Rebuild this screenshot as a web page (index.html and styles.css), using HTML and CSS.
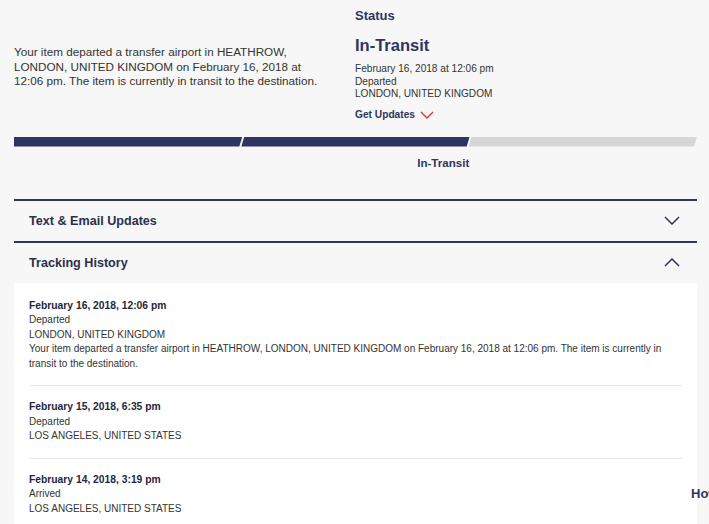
FILE: index.html
```html
<!DOCTYPE html>
<html lang="en">

<head>
    <meta charset="UTF-8">
    <meta name="viewport" content="width=device-width, initial-scale=1.0">
    <title>Tracking</title>
    <link rel="stylesheet" href="styles.css">
</head>

<body>

    <div class="page">
        <!-- SUMMARY -->
        <div class="summary">
            <p class="summary-text">Your item departed a transfer airport in HEATHROW, LONDON, UNITED KINGDOM on February 16, 2018 at 12:06 pm. The item is currently in transit to the destination.</p>
            <div class="status">
                <h3 class="status-label">Status</h3>
                <h2 class="status-value">In-Transit</h2>
                <div class="status-detail">
                    <div>February 16, 2018 at 12:06 pm</div>
                    <div>Departed</div>
                    <div>LONDON, UNITED KINGDOM</div>
                </div>
                <a class="get-updates">Get Updates
                    <svg width="14" height="8" viewBox="0 0 14 8"><path d="M1 1l6 6 6-6" fill="none" stroke="#e2352b" stroke-width="1.4"/></svg>
                </a>
            </div>
        </div>

        <!-- PROGRESS -->
        <div class="progress">
            <div class="step step-first done"></div>
            <div class="step done"></div>
            <div class="step step-last"></div>
        </div>
        <div class="progress-labels">
            <span></span>
            <span class="current">In-Transit</span>
            <span></span>
        </div>

        <!-- ACCORDION -->
        <div class="accordion">
            <div class="acc-head">
                <span>Text &amp; Email Updates</span>
                <svg width="16" height="9" viewBox="0 0 16 9"><path d="M1 1l7 7 7-7" fill="none" stroke="#2e3562" stroke-width="1.5"/></svg>
            </div>
            <div class="acc-head">
                <span>Tracking History</span>
                <svg width="16" height="9" viewBox="0 0 16 9"><path d="M1 8l7-7 7 7" fill="none" stroke="#2e3562" stroke-width="1.5"/></svg>
            </div>
            <div class="history">
                <div class="entry">
                    <div class="entry-date">February 16, 2018, 12:06 pm</div>
                    <div>Departed</div>
                    <div>LONDON, UNITED KINGDOM</div>
                    <div>Your item departed a transfer airport in HEATHROW, LONDON, UNITED KINGDOM on February 16, 2018 at 12:06 pm. The item is currently in transit to the destination.</div>
                </div>
                <div class="entry">
                    <div class="entry-date">February 15, 2018, 6:35 pm</div>
                    <div>Departed</div>
                    <div>LOS ANGELES, UNITED STATES</div>
                </div>
                <div class="entry">
                    <div class="entry-date">February 14, 2018, 3:19 pm</div>
                    <div>Arrived</div>
                    <div>LOS ANGELES, UNITED STATES</div>
                </div>
            </div>
        </div>

        <h3 class="side-title">How</h3>
    </div>

</body>

</html>
```

FILE: styles.css
```css
* {
    margin: 0;
    padding: 0;
    box-sizing: border-box;
}

body {
    background: #f7f7f7;
    font-family: "Liberation Sans", Arial, sans-serif;
    color: #333;
    overflow: hidden;
}

.page {
    position: relative;
    width: 697px;
    padding-left: 14px;
    min-height: 524px;
}

/* SUMMARY */
.summary {
    display: flex;
    align-items: center;
    padding: 8px 0 15px;
}

.summary-text {
    width: 341px;
    padding-right: 30px;
    font-size: 11.7px;
    line-height: 14.5px;
    padding-top: 4px;
}

.status {
    color: #2e3562;
}

.status-label {
    font-size: 13px;
    line-height: 16px;
}

.status-value {
    font-size: 16.5px;
    line-height: 20px;
    margin-top: 11px;
}

.status-detail {
    margin-top: 8px;
    font-size: 10.1px;
    line-height: 12.5px;
    color: #333;
}

.get-updates {
    display: flex;
    align-items: center;
    gap: 5px;
    margin-top: 7px;
    font-size: 10.2px;
    font-weight: bold;
    line-height: 14px;
}

/* PROGRESS */
.progress {
    display: flex;
    height: 10px;
}

.step {
    flex: 1;
    background: #d5d6d8;
    clip-path: polygon(3px 0, 100% 0, calc(100% - 3px) 100%, 0 100%);
}

.step + .step {
    margin-left: -1px;
}

.step.done {
    background: #2e3562;
}

.step-first {
    clip-path: polygon(0 0, 100% 0, calc(100% - 3px) 100%, 0 100%);
}

.progress-labels {
    display: flex;
    margin-top: 9px;
}

.progress-labels span {
    flex: 1;
    font-size: 11.6px;
    line-height: 14px;
    font-weight: bold;
    color: #2e3562;
}

.progress-labels .current {
    text-align: right;
}

/* ACCORDION */
.accordion {
    margin-top: 29px;
}

.acc-head {
    display: flex;
    align-items: center;
    justify-content: space-between;
    height: 42px;
    padding: 0 17px 0 15px;
    border-top: 2px solid #2e3562;
    font-size: 12.6px;
    font-weight: bold;
    color: #2b2f4d;
}

.history {
    background: #fff;
    padding: 2px 15px 0;
    min-height: 260px;
}

.entry {
    padding: 14px 0;
    font-size: 10px;
    line-height: 14.5px;
    color: #333;
}

.entry + .entry {
    border-top: 1px solid #e8e8e8;
}

.entry-date {
    font-size: 10.3px;
    font-weight: bold;
    color: #232640;
}

.side-title {
    position: absolute;
    left: 691px;
    top: 486px;
    font-size: 13px;
    line-height: 16px;
    color: #2e3562;
}
```
